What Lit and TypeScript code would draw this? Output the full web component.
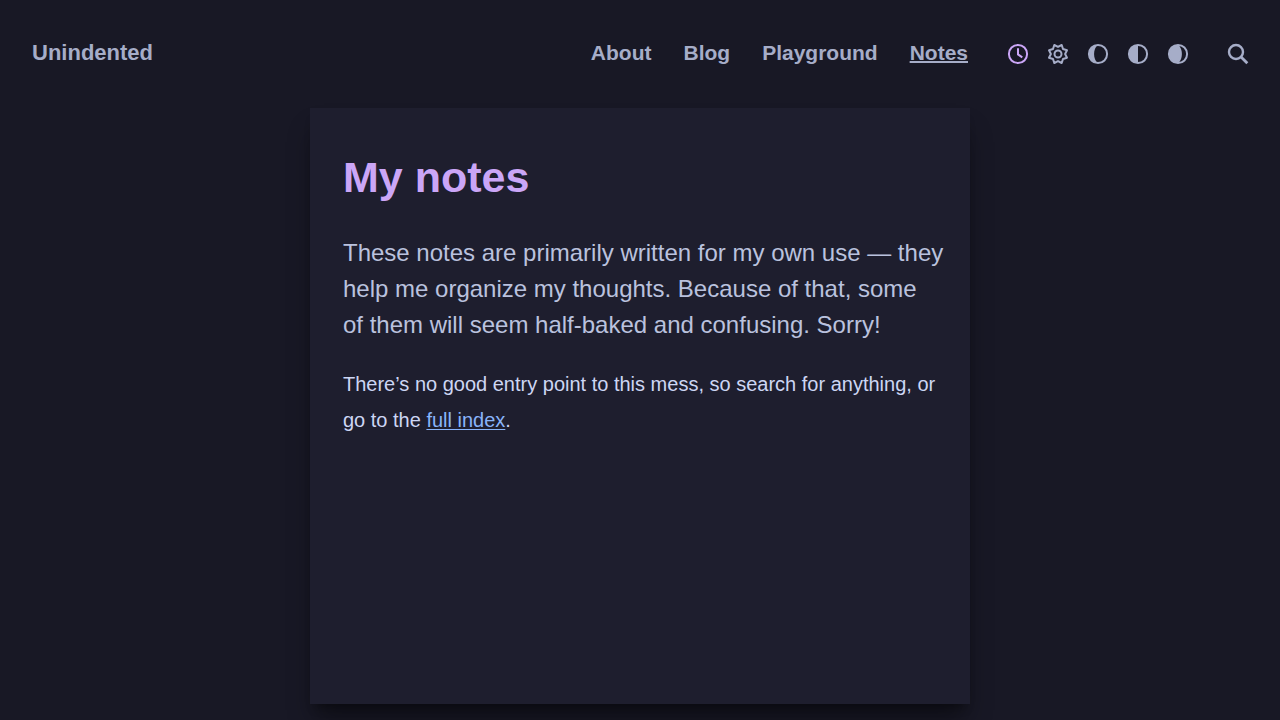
import { LitElement, html, svg, css } from "lit";
import { customElement, state } from "lit/decorators.js";

const ICONS: Record<string, unknown> = {
  auto: svg`<circle cx="10" cy="10" r="9.100" fill="none" stroke="currentColor" stroke-width="2"/><path d="M10 4.300V10.400L14.300 13.300" fill="none" stroke="currentColor" stroke-width="2"/>`,
  light: svg`<path d="M10 2.900L13.700 1L15 5L19 6.300L17.100 10L19 13.700L15 15L13.700 19L10 17.100L6.300 19L5 15L1 13.700L2.900 10L1 6.300L5 5L6.300 1Z" fill="none" stroke="currentColor" stroke-width="2" stroke-linejoin="round"/><circle cx="10" cy="10" r="3.500" fill="none" stroke="currentColor" stroke-width="2"/>`,
  dim: svg`<circle cx="10" cy="10" r="9.100" fill="none" stroke="currentColor" stroke-width="2"/><path d="M10 1A9 9 0 0 0 10 19C4.800 16 4.800 4 10 1Z" fill="currentColor"/>`,
  dark: svg`<circle cx="10" cy="10" r="9.100" fill="none" stroke="currentColor" stroke-width="2"/><path d="M10 1A9 9 0 0 0 10 19Z" fill="currentColor"/>`,
  black: svg`<circle cx="10" cy="10" r="9.100" fill="none" stroke="currentColor" stroke-width="2"/><path d="M10 1A9 9 0 0 0 10 19C15.200 16 15.200 4 10 1Z" fill="currentColor"/>`,
  search: svg`<circle cx="8" cy="8" r="7" fill="none" stroke="currentColor" stroke-width="2.400"/><path d="M12.800 12.800L19.300 19.300" fill="none" stroke="currentColor" stroke-width="2.800"/>`,
};

const THEMES = [
  ["auto", "Automatic theme"],
  ["light", "Light theme"],
  ["dim", "Dim theme"],
  ["dark", "Dark theme"],
  ["black", "Black theme"],
];

const LINKS = ["About", "Blog", "Playground", "Notes"];

@customElement("app-root")
export class AppRoot extends LitElement {
  static styles = css`
    :host {
      display: flex;
      flex-direction: column;
      box-sizing: border-box;
      min-height: 100vh;
      padding-bottom: 16px;
      background: #181825;
      color: #cdd6f4;
      font-family: "Liberation Sans", Arial, sans-serif;
      font-size: 20px;
      line-height: 36px;
    }
    .header {
      display: flex;
      align-items: center;
      gap: 40px;
      padding: 36px 32px;
      color: #a6adc8;
      font-weight: bold;
      line-height: 34px;
    }
    .brand {
      margin-right: auto;
      padding-bottom: 2px;
      font-size: 22px;
      color: inherit;
      text-decoration: none;
    }
    .nav {
      display: flex;
      gap: 32px;
      padding-bottom: 2px;
      font-size: 21px;
    }
    .link {
      color: inherit;
      text-decoration: none;
    }
    .link.current {
      text-decoration: underline;
      text-decoration-thickness: 2px;
      text-decoration-skip-ink: none;
      text-underline-offset: 1px;
    }
    .themes {
      display: flex;
      gap: 20px;
    }
    .icon {
      display: block;
      width: 20px;
      height: 20px;
      padding: 0;
      border: 0;
      background: none;
      color: #a6adc8;
      cursor: pointer;
    }
    .icon[aria-pressed="true"] {
      color: #cba6f7;
    }
    .icon svg {
      display: block;
      overflow: visible;
    }
    .card {
      flex: 1;
      box-sizing: border-box;
      width: 100%;
      max-width: 660px;
      margin: 0 auto;
      padding: 40px 26px 40px 33px;
      background: #1e1e2e;
      box-shadow: 0 20px 25px -5px rgba(0, 0, 0, 0.4), 0 8px 10px -6px rgba(0, 0, 0, 0.4);
    }
    .title {
      margin: 0 0 28px;
      color: #cba6f7;
      font-size: 43px;
      line-height: 59px;
    }
    .lead {
      margin: 0 0 23px;
      color: #bac2de;
      font-size: 24px;
    }
    .text {
      margin: 0;
    }
    .text a {
      color: #89b4fa;
      text-decoration-thickness: 1px;
      text-underline-offset: 2px;
    }
  `;

  @state() private theme = "auto";

  render() {
    return html`
      <header class="header">
        <a class="brand" href="#">Unindented</a>
        <nav class="nav">
          ${LINKS.map(
            (name) => html`<a class="link ${name === "Notes" ? "current" : ""}" href="#${name.toLowerCase()}">${name}</a>`
          )}
        </nav>
        <div class="themes" role="group" aria-label="Theme">
          ${THEMES.map(
            ([id, label]) => html`<button
              class="icon"
              aria-label=${label}
              aria-pressed=${this.theme === id}
              @click=${() => (this.theme = id)}
            ><svg viewBox="0 0 20 20" aria-hidden="true">${ICONS[id]}</svg></button>`
          )}
        </div>
        <button class="icon" aria-label="Search"><svg viewBox="0 0 20 20" aria-hidden="true">${ICONS.search}</svg></button>
      </header>
      <main class="card">
        <h1 class="title">My notes</h1>
        <p class="lead">These notes are primarily written for my own use — they help me organize my thoughts. Because of that, some of&nbsp;them will seem half-baked and confusing. Sorry!</p>
        <p class="text">There’s no good entry point to this mess, so search for anything, or go to the <a href="#index">full index</a>.</p>
      </main>
    `;
  }
}
